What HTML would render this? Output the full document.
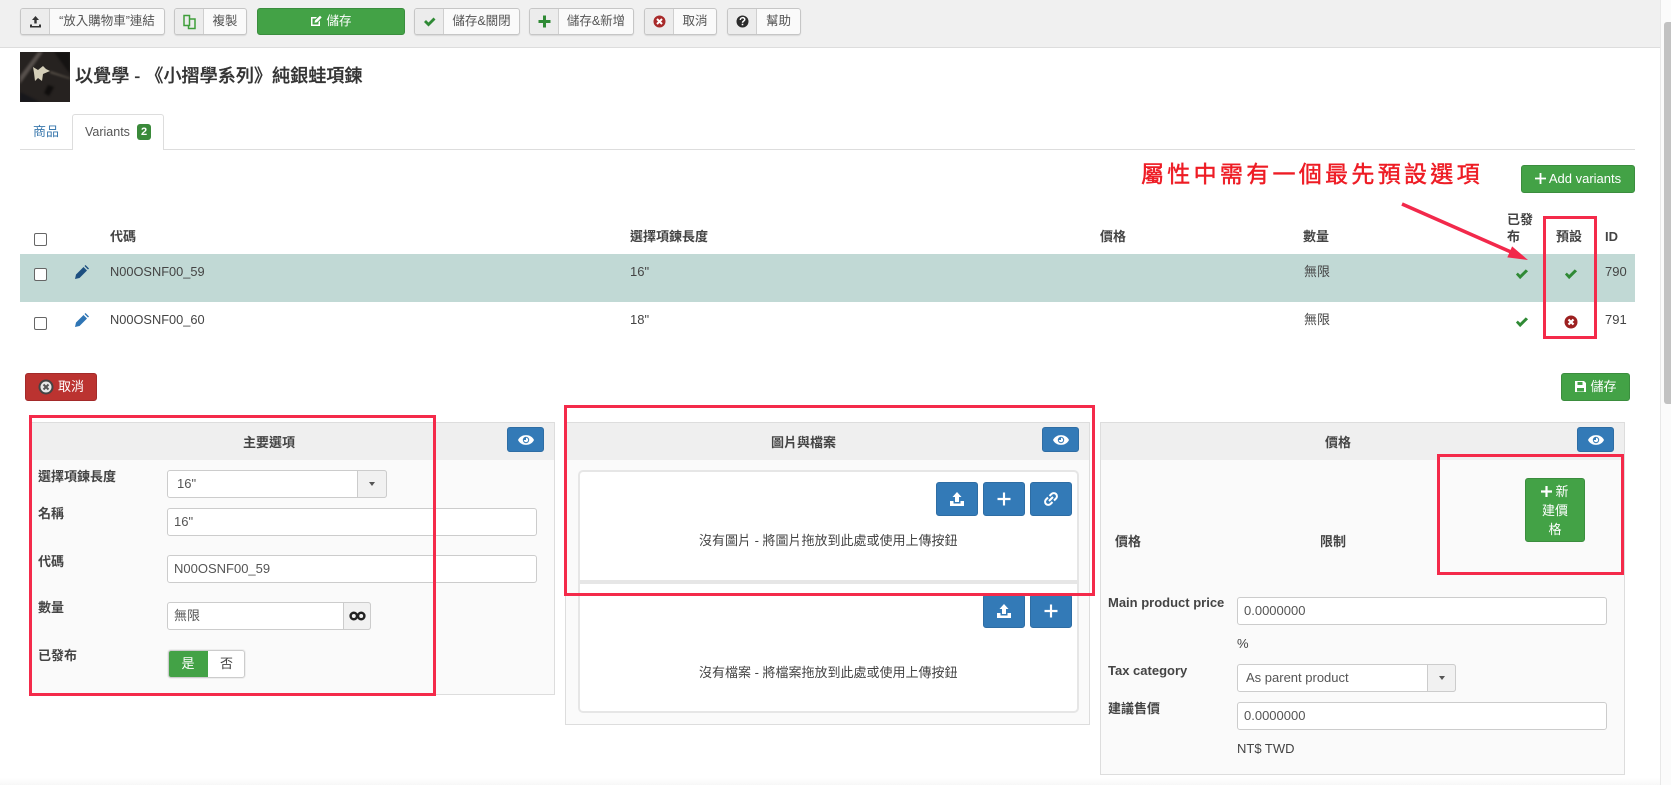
<!DOCTYPE html>
<html lang="zh-Hant"><head><meta charset="utf-8"><title>Variants</title>
<style>
*{box-sizing:border-box}
html,body{margin:0;padding:0;width:1671px;height:785px;overflow:hidden;background:#fff}
body{position:relative;font:13px/18px "Liberation Sans","Noto Sans CJK TC",sans-serif;color:#444}
.a{position:absolute}
.t{position:absolute;white-space:nowrap;line-height:18px}
.b{font-weight:700;color:#444}
.tb{position:absolute;top:8px;height:27px;background:#fafafa;border:1px solid #c6c6c6;border-radius:3px;box-shadow:0 1px 1px rgba(0,0,0,.1);line-height:25px;text-align:center;color:#555;font-size:12.5px;overflow:hidden}
.tb i{position:absolute;left:0;top:0;bottom:0;width:29px;background:#ececec;border-right:1px solid #cfcfcf}
.tb i svg{position:absolute;left:7px;top:5px}
.tb span{position:absolute;left:29px;right:0;top:0}
.g{position:absolute;background:#43a246;border:1px solid #3b8d3e;border-radius:3px;color:#fff;text-align:center}
.bl{position:absolute;background:#337ab7;border:1px solid #2e6da4;border-radius:3px}
.bl svg{position:absolute;left:50%;top:50%;transform:translate(-50%,-50%)}
.p{position:absolute;background:#fafafa;border:1px solid #ddd}
.p .h{position:absolute;left:0;right:0;top:0;height:37px;background:#efefef}
.in{position:absolute;height:28px;background:#fff;border:1px solid #ccc;border-radius:3px;line-height:26px;padding-left:6px;color:#555}
.ad{position:absolute;top:-1px;bottom:-1px;right:-1px;background:#f1f1f1;border:1px solid #ccc;border-radius:0 3px 3px 0}
.car{position:absolute;left:50%;top:50%;margin:-2px 0 0 -3px;border:3px solid transparent;border-top:4px solid #555;border-bottom:0}
.box{position:absolute;background:#fff;border:2px solid #e6e6e6;left:578px;width:501px}
.cb{position:absolute;left:34px;width:13px;height:13px;background:#fff;border:1px solid #666;border-radius:2px}
.rr{position:absolute;border:3px solid #f42a4a;pointer-events:none}
</style></head><body>

<!-- toolbar -->
<div class="a" style="left:0;top:0;width:1660px;height:48px;background:#f0f0f0;border-bottom:1px solid #ddd"></div>

<div class="tb" style="left:20px;width:145px"><i><svg width="15" height="15" viewBox="0 0 15 15"><path d="M7.500 2 4 6h2.300v3.500h2.400V6H11zM2 10.500h2V12h7v-1.500h2V13.500H2z" fill="#333"/></svg></i><span>“放入購物車”連結</span></div>
<div class="tb" style="left:174px;width:73px"><i><svg width="15" height="16" viewBox="0 0 15 16" fill="none" stroke="#3f9e3a" stroke-width="1.500"><path d="M2 1.500h5.500v10H2zM7.500 5H13v9.500H6.500v-3"/></svg></i><span>複製</span></div>
<div class="g" style="left:257px;top:8px;width:148px;height:27px;line-height:25px;font-size:12.5px"><svg width="12" height="12" viewBox="0 0 12 12" style="vertical-align:-2px;margin-right:4px"><path d="M1 2h6L5.500 3.500H2.500v6h6V7L10 5.500V11H1z" fill="#fff"/><path d="M4.500 7.700 5 5.500 10 .7l1.700 1.700L7 7.200z" fill="#fff"/></svg>儲存</div>
<div class="tb" style="left:414px;width:106px"><i><svg width="15" height="15" viewBox="0 0 15 15"><path d="M2 8l2-2 2.500 2.500L11.500 3.500l2 2-7 7z" fill="#2f8a35"/></svg></i><span>儲存&amp;關閉</span></div>
<div class="tb" style="left:529px;width:105px"><i><svg width="15" height="15" viewBox="0 0 15 15"><path d="M6 1.500h3V6h4.500v3H9v4.500H6V9H1.500V6H6z" fill="#2f8a35"/></svg></i><span>儲存&amp;新增</span></div>
<div class="tb" style="left:644px;width:73px"><i><svg width="15" height="15" viewBox="0 0 15 15"><circle cx="7.500" cy="7.500" r="6" fill="#a82a2a"/><path d="M5 5l5 5M10 5l-5 5" stroke="#fff" stroke-width="2"/></svg></i><span>取消</span></div>
<div class="tb" style="left:727px;width:74px"><i><svg width="15" height="15" viewBox="0 0 15 15"><circle cx="7.500" cy="7.500" r="6" fill="#2b2b2b"/><path d="M5.300 6c0-3 4.500-3 4.500-.5 0 1.500-2.300 1.500-2.300 3.200" fill="none" stroke="#fff" stroke-width="1.500"/><path d="M6.700 9.800h1.600v1.500H6.700z" fill="#fff"/></svg></i><span>幫助</span></div>

<!-- title -->
<svg class="a" style="left:20px;top:52px" width="50" height="50" viewBox="0 0 50 50">
<rect width="50" height="50" fill="#262220"/><g style="filter:blur(1px)"><path d="M0 24 18 0h5L0 32z" fill="#57504c"/><path d="M34 0h16v22z" fill="#151312"/><path d="M0 40l20 10H0z" fill="#17171b"/><path d="M28 33l6 2-5 9-5-3z" fill="#100e0d"/><path d="M30 19l20 7v1l-20-6z" fill="#5e574d"/></g>
<path d="M13 15l5 3 5-4 3 3 4 2-7 3-1 7-4-3-3 3-1-8z" fill="#d5cfb9"/></svg>
<div class="t" style="left:75px;top:65px;font-size:18.100px;line-height:22px;color:#333;font-weight:500;-webkit-text-stroke:.25px #333">以覺學 - 《小摺學系列》純銀蛙項鍊</div>

<!-- tabs -->
<div class="a" style="left:20px;top:149px;width:1615px;height:1px;background:#ddd"></div>
<div class="a" style="left:72px;top:114px;width:92px;height:36px;background:#fff;border:1px solid #ddd;border-bottom:0;border-radius:3px 3px 0 0"></div>
<div class="t" style="left:33px;top:123px;color:#3a78ad">商品</div>
<div class="t" style="left:85px;top:123px;color:#555;font-size:12.500px">Variants</div>
<div class="a" style="left:137px;top:124px;width:14px;height:16px;background:#3a8a3a;border-radius:3px;color:#fff;text-align:center;font:700 11px/16px 'Liberation Sans',sans-serif">2</div>

<!-- annotation -->
<div class="t" style="left:1141px;top:160px;font-size:23px;line-height:28px;letter-spacing:3.300px;color:#ee1c25;-webkit-text-stroke:.45px #ee1c25">屬性中需有一個最先預設選項</div>
<div class="g" style="left:1521px;top:165px;width:114px;height:28px;line-height:26px"><svg width="11" height="11" viewBox="0 0 12 12" style="vertical-align:-1px;margin-right:3px"><path d="M5 0h2v5h5v2H7v5H5V7H0V5h5z" fill="#fff"/></svg>Add variants</div>

<!-- table -->
<div class="a" style="left:20px;top:254px;width:1615px;height:48px;background:#c1d9d5"></div>
<div class="cb" style="top:233px"></div><div class="cb" style="top:268px"></div><div class="cb" style="top:317px"></div>
<div class="t b" style="left:110px;top:228px">代碼</div>
<div class="t b" style="left:630px;top:228px">選擇項鍊長度</div>
<div class="t b" style="left:1100px;top:228px">價格</div>
<div class="t b" style="left:1303px;top:228px">數量</div>
<div class="t b" style="left:1507px;top:211px">已發</div>
<div class="t b" style="left:1507px;top:228px">布</div>
<div class="t b" style="left:1556px;top:228px">預設</div>
<div class="t b" style="left:1605px;top:228px">ID</div>

<svg class="a" style="left:75px;top:265px" width="14" height="14" viewBox="0 0 14 14"><path d="M0 14l1-4.500 7.500-7.500 3.500 3.500L4.500 13zM9.500 1 10.500 0 14 3.500 13 4.500z" fill="#1d4f80"/></svg>
<svg class="a" style="left:75px;top:313px" width="14" height="14" viewBox="0 0 14 14"><path d="M0 14l1-4.500 7.500-7.500 3.500 3.500L4.500 13zM9.500 1 10.500 0 14 3.500 13 4.500z" fill="#2f75b5"/></svg>

<div class="t" style="left:110px;top:263px;font-size:12.800px">N00OSNF00_59</div>
<div class="t" style="left:630px;top:263px">16"</div>
<div class="t" style="left:1304px;top:263px">無限</div>
<div class="t" style="left:1605px;top:263px">790</div>
<div class="t" style="left:110px;top:311px;font-size:12.800px">N00OSNF00_60</div>
<div class="t" style="left:630px;top:311px">18"</div>
<div class="t" style="left:1304px;top:311px">無限</div>
<div class="t" style="left:1605px;top:311px">791</div>

<svg class="a" style="left:1515px;top:267px" width="14" height="14" viewBox="0 0 15 15"><path d="M1 8l2-2 2.500 2.500L11.500 2.500l2.500 2-8.500 8.500z" fill="#2f8a35"/></svg>
<svg class="a" style="left:1564px;top:267px" width="14" height="14" viewBox="0 0 15 15"><path d="M1 8l2-2 2.500 2.500L11.500 2.500l2.500 2-8.500 8.500z" fill="#2f8a35"/></svg>
<svg class="a" style="left:1515px;top:315px" width="14" height="14" viewBox="0 0 15 15"><path d="M1 8l2-2 2.500 2.500L11.500 2.500l2.500 2-8.500 8.500z" fill="#2f8a35"/></svg>
<svg class="a" style="left:1564px;top:315px" width="14" height="14" viewBox="0 0 14 14"><circle cx="7" cy="7" r="6.500" fill="#9c2020"/><path d="M4.500 4.500l5 5M9.500 4.500l-5 5" stroke="#fff" stroke-width="2.200"/></svg>

<!-- cancel/save -->
<div class="a" style="left:25px;top:373px;width:72px;height:28px;background:#bb3330;border:1px solid #a32a2a;border-radius:3px;color:#fff;line-height:26px;padding-left:32px"><svg class="a" style="left:12px;top:5px" width="16" height="16" viewBox="0 0 16 16"><circle cx="8" cy="8" r="7.500" fill="#444"/><circle cx="8" cy="8" r="5.500" fill="#e8e8e8"/><path d="M5.500 5.500l5 5M10.500 5.500l-5 5" stroke="#555" stroke-width="2"/></svg>取消</div>
<div class="g" style="left:1561px;top:373px;width:69px;height:28px;line-height:26px"><svg width="13" height="13" viewBox="0 0 13 13" style="vertical-align:-2px;margin-right:3px"><path d="M1 1h9l2 2v9H1z" fill="#fff"/><path d="M3.500 2h5v3h-5zM3 8h7v3.500H3z" fill="#43a246"/></svg>儲存</div>

<!-- panels -->
<div class="p" style="left:31px;top:422px;width:524px;height:273px"><div class="h"></div></div>
<div class="p" style="left:565px;top:422px;width:525px;height:303px"><div class="h"></div></div>
<div class="p" style="left:1100px;top:422px;width:525px;height:353px"><div class="h"></div></div>

<div class="t b" style="left:243px;top:434px">主要選項</div>
<div class="t b" style="left:771px;top:434px">圖片與檔案</div>
<div class="t b" style="left:1325px;top:434px">價格</div>

<div class="bl" style="left:507px;top:427px;width:37px;height:25px"><svg width="16" height="12" viewBox="0 0 16 12"><path d="M0 6c3-6.500 13-6.500 16 0-3 6.500-13 6.500-16 0z" fill="#fff"/><circle cx="8" cy="6" r="3.200" fill="#337ab7"/><path d="M8 3.800a2.200 2.200 0 1 1-2.200 2.200H8z" fill="#fff"/></svg></div>
<div class="bl" style="left:1042px;top:427px;width:37px;height:25px"><svg width="16" height="12" viewBox="0 0 16 12"><path d="M0 6c3-6.500 13-6.500 16 0-3 6.500-13 6.500-16 0z" fill="#fff"/><circle cx="8" cy="6" r="3.200" fill="#337ab7"/><path d="M8 3.800a2.200 2.200 0 1 1-2.200 2.200H8z" fill="#fff"/></svg></div>
<div class="bl" style="left:1577px;top:427px;width:37px;height:25px"><svg width="16" height="12" viewBox="0 0 16 12"><path d="M0 6c3-6.500 13-6.500 16 0-3 6.500-13 6.500-16 0z" fill="#fff"/><circle cx="8" cy="6" r="3.200" fill="#337ab7"/><path d="M8 3.800a2.200 2.200 0 1 1-2.200 2.200H8z" fill="#fff"/></svg></div>

<!-- panel 1 -->
<div class="t b" style="left:38px;top:468px">選擇項鍊長度</div>
<div class="t b" style="left:38px;top:505px">名稱</div>
<div class="t b" style="left:38px;top:553px">代碼</div>
<div class="t b" style="left:38px;top:599px">數量</div>
<div class="t b" style="left:38px;top:647px">已發布</div>
<div class="in" style="left:167px;top:470px;width:220px;padding-left:9px">16"<div class="ad" style="width:30px"><div class="car"></div></div></div>
<div class="in" style="left:167px;top:508px;width:370px">16"</div>
<div class="in" style="left:167px;top:555px;width:370px">N00OSNF00_59</div>
<div class="in" style="left:167px;top:602px;width:204px;padding-left:6px">無限<div class="ad" style="width:28px"><svg class="a" style="left:5px;top:8px" width="17" height="10" viewBox="0 0 17 10" fill="none" stroke="#222" stroke-width="2.500"><circle cx="4.800" cy="5" r="3.200"/><circle cx="12.200" cy="5" r="3.200"/></svg></div></div>
<div class="a" style="left:168px;top:650px;width:77px;height:28px;background:#fff;border:1px solid #ccc;border-radius:3px;box-shadow:0 0 0 1px #eee;overflow:hidden"><div class="a" style="left:-1px;top:-1px;width:40px;height:28px;background:#43a246;color:#fff;text-align:center;line-height:27px">是</div><div class="a" style="left:39px;top:0;width:37px;text-align:center;line-height:25px">否</div></div>

<!-- panel 2 -->
<div class="box" style="top:470px;height:114px;border-radius:5px 5px 0 0;border-bottom:0"></div>
<div class="box" style="top:584px;height:129px;border-radius:0 0 5px 5px;border-top:0"></div>
<div class="a" style="left:578px;top:580px;width:501px;height:4px;background:#e6e6e6"></div>
<div class="bl" style="left:936px;top:482px;width:42px;height:34px"><svg width="16" height="16" viewBox="0 0 16 16"><path d="M8 1 3.500 6H6v5h4V6h2.500zM1 10h3.500v2.500h7V10H15v5H1z" fill="#fff"/></svg></div>
<div class="bl" style="left:983px;top:482px;width:42px;height:34px"><svg width="13" height="13" viewBox="0 0 12 12"><path d="M5 0h2v5h5v2H7v5H5V7H0V5h5z" fill="#fff"/></svg></div>
<div class="bl" style="left:1030px;top:482px;width:42px;height:34px"><svg width="15" height="15" viewBox="0 0 15 15" fill="none" stroke="#fff" stroke-width="2"><path d="M6 4.500 8 2.500a3 3 0 0 1 4.500 4.500L10.500 9M9 10.500 7 12.500A3 3 0 0 1 2.500 8L4.500 6M5.500 9.500l4-4"/></svg></div>
<div class="t" style="left:699px;top:532px">沒有圖片 - 將圖片拖放到此處或使用上傳按鈕</div>
<div class="bl" style="left:983px;top:594px;width:42px;height:34px"><svg width="16" height="16" viewBox="0 0 16 16"><path d="M8 1 3.500 6H6v5h4V6h2.500zM1 10h3.500v2.500h7V10H15v5H1z" fill="#fff"/></svg></div>
<div class="bl" style="left:1030px;top:594px;width:42px;height:34px"><svg width="13" height="13" viewBox="0 0 12 12"><path d="M5 0h2v5h5v2H7v5H5V7H0V5h5z" fill="#fff"/></svg></div>
<div class="t" style="left:699px;top:664px">沒有檔案 - 將檔案拖放到此處或使用上傳按鈕</div>

<!-- panel 3 -->
<div class="g" style="left:1525px;top:478px;width:60px;height:64px;padding:3px 0;line-height:19px"><svg width="11" height="11" viewBox="0 0 12 12" style="vertical-align:-1px;margin-right:3px"><path d="M4.800 0h2.400v4.800H12v2.400H7.200V12H4.800V7.200H0V4.800h4.800z" fill="#fff"/></svg>新<br>建價<br>格</div>
<div class="t b" style="left:1115px;top:533px">價格</div>
<div class="t b" style="left:1320px;top:533px">限制</div>
<div class="t b" style="left:1108px;top:594px">Main product price</div>
<div class="in" style="left:1237px;top:597px;width:370px;height:28px">0.0000000</div>
<div class="t" style="left:1237px;top:635px">%</div>
<div class="t b" style="left:1108px;top:662px">Tax category</div>
<div class="in" style="left:1237px;top:664px;width:219px;padding-left:8px">As parent product<div class="ad" style="width:29px"><div class="car"></div></div></div>
<div class="t b" style="left:1108px;top:700px">建議售價</div>
<div class="in" style="left:1237px;top:702px;width:370px">0.0000000</div>
<div class="t" style="left:1237px;top:740px">NT$ TWD</div>

<!-- red annotations -->
<div class="rr" style="left:1543px;top:216px;width:54px;height:123px"></div>
<div class="rr" style="left:29px;top:415px;width:407px;height:281px"></div>
<div class="rr" style="left:564px;top:405px;width:531px;height:191px"></div>
<div class="rr" style="left:1437px;top:454px;width:187px;height:121px"></div>
<svg class="a" style="left:1395px;top:198px" width="140" height="68" viewBox="0 0 140 68"><path d="M7 6 116 54" fill="none" stroke="#f2294b" stroke-width="3.500"/><path d="M133 62 112.300 59.400 117.100 48.400z" fill="#f2294b"/></svg>

<!-- scrollbar -->
<div class="a" style="left:1660px;top:0;width:11px;height:785px;background:#fbfbfb;border-left:1px solid #e8e8e8"></div>
<div class="a" style="left:1664px;top:22px;width:7px;height:382px;background:#c2c2c2;border-radius:3px 0 0 3px"></div>
<div class="a" style="left:0;top:778px;width:1660px;height:7px;background:linear-gradient(#fff,#f7f7f7)"></div>
</body></html>
